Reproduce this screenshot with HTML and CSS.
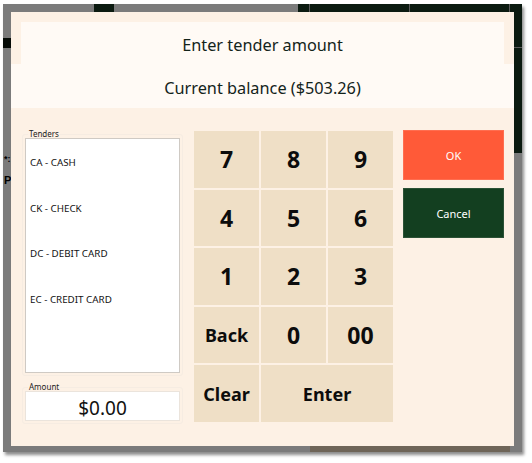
FILE: index.html
```html
<!DOCTYPE html>
<html>
<head>
<meta charset="utf-8">
<link rel="stylesheet" href="styles.css">
</head>
<body>
<div class="shot">
  <div class="bg bg-dark-a"></div>
  <div class="bg bg-dark-b"></div>
  <div class="bg bg-dark-right"></div>
  <div class="bg bg-line-h"></div>
  <div class="bg bg-line-v v1"></div>
  <div class="bg bg-line-v v2"></div>
  <div class="bg bg-line-v v3"></div>
  <div class="bg bg-left-block"></div>
  <div class="bg bg-bottom"></div>
  <div class="bg bg-text-a">*:</div>
  <div class="bg bg-text-b">P</div>

  <div class="dialog">
    <div class="title-wrap">
      <div class="title">Enter tender amount</div>
    </div>
    <div class="balance">Current balance ($503.26)</div>
    <div class="body">
      <div class="left">
        <fieldset class="group tenders">
          <legend>Tenders</legend>
          <div class="list">
            <div class="item">CA - CASH</div>
            <div class="item">CK - CHECK</div>
            <div class="item">DC - DEBIT CARD</div>
            <div class="item">EC - CREDIT CARD</div>
          </div>
        </fieldset>
        <fieldset class="group amount">
          <legend>Amount</legend>
          <div class="amount-box">$0.00</div>
        </fieldset>
      </div>
      <div class="keypad">
        <div class="key">7</div>
        <div class="key">8</div>
        <div class="key">9</div>
        <div class="key">4</div>
        <div class="key">5</div>
        <div class="key">6</div>
        <div class="key">1</div>
        <div class="key">2</div>
        <div class="key">3</div>
        <div class="key word">Back</div>
        <div class="key">0</div>
        <div class="key">00</div>
        <div class="key word">Clear</div>
        <div class="key word wide">Enter</div>
      </div>
      <div class="actions">
        <div class="btn ok">OK</div>
        <div class="btn cancel">Cancel</div>
      </div>
    </div>
  </div>
</div>
</body>
</html>
```

FILE: styles.css
```css
* { box-sizing: border-box; }
html, body {
  margin: 0;
  padding: 0;
  background: #ffffff;
  font-family: "Noto Sans", "Open Sans", sans-serif;
}
body { width: 532px; height: 463px; overflow: hidden; }

.shot {
  position: relative;
  margin: 4px 0 0 3px;
  width: 519px;
  height: 448px;
  background: #7b7b7b;
  padding: 8px 8px 6px 8px;
  box-shadow: 2px 3px 3px rgba(0,0,0,0.45);
}

.bg { position: absolute; }
.bg-dark-a { left: 91px; top: 0; width: 20px; height: 8px; background: #0b1a10; }
.bg-dark-b { left: 295px; top: 0; width: 224px; height: 8px; background: #0b1a10; }
.bg-dark-right { left: 511px; top: 0; width: 8px; height: 149px; background: #0b1a10; }
.bg-line-h { left: 511px; top: 43px; width: 8px; height: 1px; background: #5a5a5a; }
.bg-line-v { top: 0; width: 1px; height: 8px; background: #5a5a5a; }
.v1 { left: 306px; }
.v2 { left: 406px; }
.v3 { left: 506px; }
.bg-left-block { left: 0; top: 34px; width: 8px; height: 10px; background: #050a06; }
.bg-bottom { left: 307px; top: 442px; width: 200px; height: 6px; background: #6f6558; }
.bg-text-a { left: 1px; top: 150px; font: bold 9px "Liberation Sans", sans-serif; color: #000; }
.bg-text-b { left: 1px; top: 170px; font: bold 11px "Liberation Sans", sans-serif; color: #000; }

.dialog {
  position: relative;
  width: 503px;
  height: 434px;
  background: #fdf1e5;
  display: flex;
  flex-direction: column;
}

.title-wrap { padding: 10px 10px 0 10px; }
.title {
  height: 42px;
  background: #fffaf5;
  display: flex;
  align-items: center;
  justify-content: center;
  font-size: 16.3px;
  color: #13231a;
  padding-top: 4px;
}
.balance {
  height: 44px;
  background: #fffaf5;
  display: flex;
  align-items: center;
  justify-content: center;
  font-size: 16.3px;
  color: #13231a;
  padding-top: 4px;
}

.body {
  flex: 1;
  display: flex;
  padding: 22px 10px 0 11px;
}

.left {
  width: 161px;
  display: flex;
  flex-direction: column;
}

.group {
  margin: 0;
  padding: 0 2px 2px 2px;
  border: 1px solid #f6ece2;
  border-radius: 3px;
  min-width: 0;
}
.group legend {
  font-size: 8px;
  line-height: 8px;
  padding: 0 1px;
  margin-left: 3px;
  color: #222;
}
.list {
  height: 235px;
  background: #ffffff;
  border: 1px solid #cfcac4;
  padding-top: 17px;
}
.item {
  height: 45.7px;
  padding-left: 4px;
  font-size: 9.8px;
  color: #111;
}
.amount { margin-top: 7px; }
.amount-box {
  height: 30px;
  background: #ffffff;
  border: 1px solid #ebe4dc;
  display: flex;
  align-items: center;
  justify-content: center;
  font-size: 19px;
  color: #111;
  padding-top: 3px;
}

.keypad {
  margin-left: 11px;
  width: 199px;
  height: 291px;
  margin-top: 1px;
  display: grid;
  grid-template-columns: repeat(3, 1fr);
  grid-template-rows: repeat(5, 1fr);
  gap: 2px;
}
.key {
  background: #efdfc6;
  display: flex;
  align-items: center;
  justify-content: center;
  font-size: 23px;
  font-weight: bold;
  color: #0c0c0c;
}
.key.word { font-size: 18px; }
.key.wide { grid-column: span 2; }

.actions {
  margin-left: 10px;
  width: 101px;
  display: flex;
  flex-direction: column;
  gap: 8px;
}
.btn {
  height: 50px;
  display: flex;
  align-items: center;
  justify-content: center;
  font-size: 11px;
  color: #ffffff;
}
.ok { background: #ff5a38; border: 1px solid #ff6e50; }
.cancel { background: #133f20; border: 1px solid #2c5236; }
```
